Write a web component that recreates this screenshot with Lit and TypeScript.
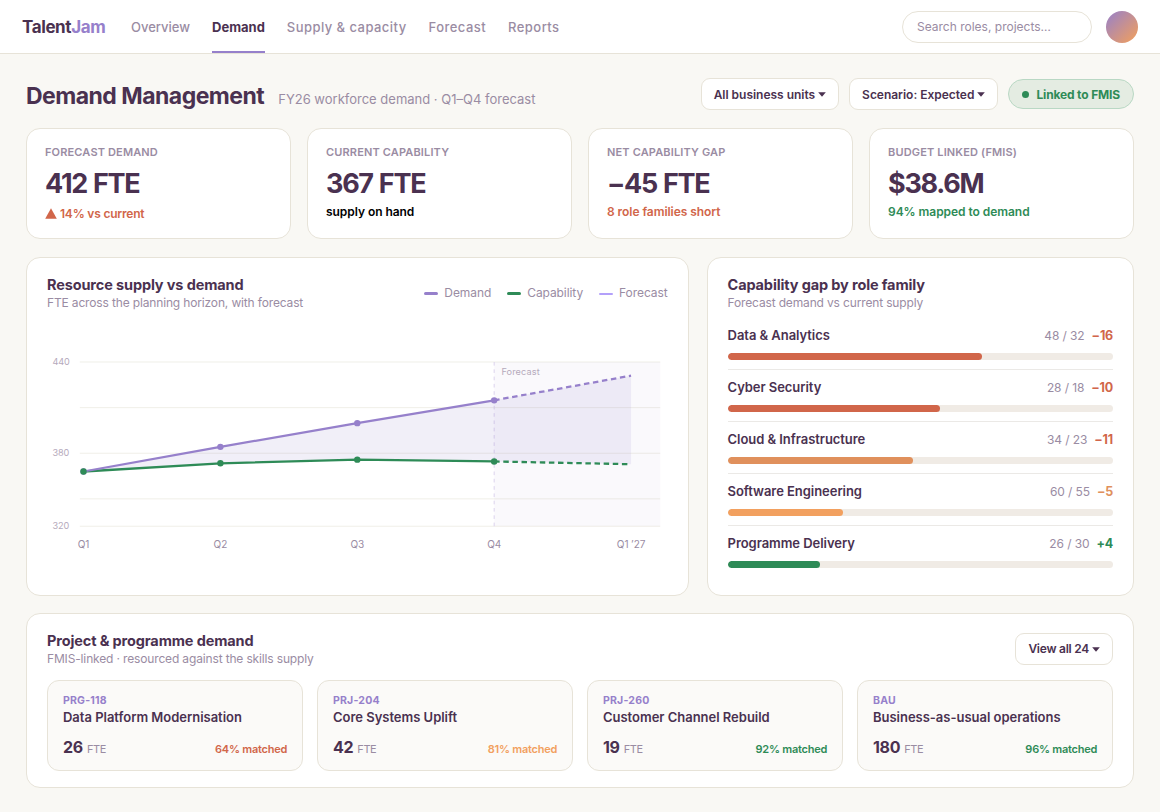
import { LitElement, html, svg, css } from 'lit';
import { customElement } from 'lit/decorators.js';

const nav = ['Overview', 'Demand', 'Supply & capacity', 'Forecast', 'Reports'];

const kpis = [
  { label: 'Forecast demand', value: '412 FTE', note: '14% vs current', tone: 'bad', up: true },
  { label: 'Current capability', value: '367 FTE', note: 'supply on hand', tone: 'plain' },
  { label: 'Net capability gap', value: '−45 FTE', note: '8 role families short', tone: 'bad' },
  { label: 'Budget linked (FMIS)', value: '$38.6M', note: '94% mapped to demand', tone: 'good' },
];

const roles = [
  { name: 'Data & Analytics', ratio: '48 / 32', gap: '−16', tone: 'bad', bar: 'bad', pct: 66 },
  { name: 'Cyber Security', ratio: '28 / 18', gap: '−10', tone: 'bad', bar: 'bad', pct: 55 },
  { name: 'Cloud & Infrastructure', ratio: '34 / 23', gap: '−11', tone: 'bad', bar: 'mid', pct: 48 },
  { name: 'Software Engineering', ratio: '60 / 55', gap: '−5', tone: 'mid', bar: 'warn', pct: 30 },
  { name: 'Programme Delivery', ratio: '26 / 30', gap: '+4', tone: 'good', bar: 'good', pct: 24 },
];

const projects = [
  { code: 'PRG-118', name: 'Data Platform Modernisation', fte: 26, match: 64, tone: 'bad' },
  { code: 'PRJ-204', name: 'Core Systems Uplift', fte: 42, match: 81, tone: 'warn' },
  { code: 'PRJ-260', name: 'Customer Channel Rebuild', fte: 19, match: 92, tone: 'good' },
  { code: 'BAU', name: 'Business-as-usual operations', fte: 180, match: 96, tone: 'good' },
];

const caret = html`<svg class="caret" width="8" height="5" viewBox="0 0 8 5"><path d="M.2 .3h7.6L4 4.7z" fill="currentColor"/></svg>`;

/* --- supply vs demand chart --- */
@customElement('supply-chart')
export class SupplyChart extends LitElement {
  static override styles = css`
    :host { display: block; min-height: 0; }
    svg { display: block; width: 100%; height: 100%; font-family: Inter, sans-serif; }
    .grid { stroke: #efede6; }
    .tick { font-size: 10px; fill: #b5a9bb; letter-spacing: -0.1px; }
    .zone { font-size: 10px; fill: #b5a9bb; letter-spacing: 0.15px; }
    .quarter { font-size: 11px; fill: #9a8ca3; text-anchor: middle; letter-spacing: -0.1px; }
    .demand { stroke: #9680cb; stroke-width: 2.5; fill: none; }
    .capability { stroke: #2e8b57; stroke-width: 2.5; fill: none; }
    .dashed { stroke-dasharray: 6 4; }
    .dot-demand { fill: #9680cb; }
    .dot-capability { fill: #2e8b57; }
  `;

  private xs = [40, 190, 340, 490];
  private demand = [140, 113, 87, 62];
  private capability = [140, 131, 127, 129];

  private points(ys: number[]) {
    return ys.map((y, i) => `${this.xs[i]},${y}`).join(' ');
  }

  override render() {
    return html`
      <svg viewBox="0 0 680 240">
        ${[20, 70, 120, 170, 200].map(y => svg`<line class="grid" x1="36" x2="672" y1=${y} y2=${y} />`)}
        <rect x="490" y="20" width="182" height="180" fill="#9680cb" opacity="0.05" />
        <line x1="490" x2="490" y1="20" y2="200" stroke="#d9d0ec" stroke-dasharray="4 4" />
        <polygon points="40,140 190,113 340,87 490,62 490,129 340,127 190,131" fill="#9680cb" opacity="0.13" />
        <polygon points="490,62 640,35 640,132 490,129" fill="#9680cb" opacity="0.12" />
        <text class="tick" x="6" y="23.5">440</text>
        <text class="tick" x="6" y="123.5">380</text>
        <text class="tick" x="6" y="203.5">320</text>
        <text class="zone" x="498" y="34.5">Forecast</text>
        <polyline class="capability" points=${this.points(this.capability)} />
        <polyline class="capability dashed" points="490,129 640,132" />
        <polyline class="demand" points=${this.points(this.demand)} />
        <polyline class="demand dashed" points="490,62 640,35" />
        ${this.xs.map((x, i) => svg`
          <circle class="dot-demand" cx=${x} cy=${this.demand[i]} r="3.5" />
          <circle class="dot-capability" cx=${x} cy=${this.capability[i]} r="3.5" />
        `)}
        ${['Q1', 'Q2', 'Q3', 'Q4', 'Q1 ’27'].map((q, i) => svg`<text class="quarter" x=${40 + i * 150} y="224">${q}</text>`)}
      </svg>
    `;
  }
}

@customElement('app-root')
export class AppRoot extends LitElement {
  static override styles = css`
    :host {
      display: block;
      min-height: 812px;
      background: #f9f8f4;
      color: #4a3150;
      font-family: Inter, sans-serif;
    }
    * { box-sizing: border-box; }

    .bad { color: #d1664a; }
    .mid { color: #e0905c; }
    .warn { color: #f2a05f; }
    .good { color: #2e8b57; }
    .plain { color: #000; }

    /* top bar */
    .topbar {
      display: flex;
      align-items: center;
      height: 54px;
      padding: 0 22px;
      background: #fff;
      border-bottom: 1px solid #e7e3d8;
    }
    .logo { width: 109px; font-size: 17px; font-weight: 700; letter-spacing: -0.4px; }
    .logo span { color: #9680cb; }
    nav { display: flex; gap: 22px; height: 53px; }
    nav a {
      display: flex;
      align-items: center;
      padding-top: 2px;
      border-bottom: 2px solid transparent;
      color: #9a8ca3;
      font-size: 13px;
      font-weight: 500;
      letter-spacing: 0.45px;
      white-space: nowrap;
    }
    nav a:first-child { letter-spacing: 0; }
    nav a.active { color: #4a3150; font-weight: 700; letter-spacing: 0; border-color: #9680cb; }
    .search {
      width: 190px;
      height: 32px;
      margin-left: auto;
      padding: 0 14px;
      border: 1px solid #e7e3d8;
      border-radius: 16px;
      color: #9a8ca3;
      font-size: 12px;
      line-height: 30px;
    }
    .avatar {
      width: 32px;
      height: 32px;
      margin-left: 14px;
      border-radius: 50%;
      background: linear-gradient(135deg, #9680cb, #f4a05a);
    }

    /* page head */
    main { display: flex; flex-direction: column; gap: 18px; padding: 24px 26px; }
    .head { display: flex; align-items: center; gap: 10px; height: 32px; }
    .titles { display: flex; align-items: baseline; gap: 14px; margin-right: auto; padding-top: 3px; }
    h1 { margin: 0; font-size: 23px; line-height: 32px; font-weight: 700; letter-spacing: -0.52px; }
    .titles span { color: #9a8ca3; font-size: 13px; }
    .button {
      display: flex;
      align-items: center;
      height: 32px;
      padding: 0 12px;
      background: #fff;
      border: 1px solid #e7e3d8;
      border-radius: 9px;
      font-size: 12px;
      font-weight: 600;
      letter-spacing: -0.02px;
      white-space: nowrap;
    }
    .panel-head .button { letter-spacing: -0.25px; }
    .caret { margin-left: 3px; margin-top: 1px; }
    .linked {
      display: flex;
      align-items: center;
      gap: 7px;
      height: 30px;
      padding: 0 13px;
      background: #e4ece2;
      border: 1px solid #b9d8c4;
      border-radius: 15px;
      color: #2e8b57;
      font-size: 12px;
      font-weight: 700;
      letter-spacing: -0.15px;
    }
    .linked::before { content: ''; width: 7px; height: 7px; border-radius: 50%; background: #2e8b57; }

    .card { background: #fff; border: 1px solid #e7e3d8; border-radius: 14px; }

    /* kpis */
    .kpis { display: grid; grid-template-columns: repeat(4, 1fr); gap: 16px; }
    .kpi { height: 111px; padding: 16px 18px; }
    .kpi .label {
      color: #9a8ca3;
      font-size: 11px;
      line-height: 14px;
      font-weight: 600;
      letter-spacing: 0.15px;
      text-transform: uppercase;
    }
    .kpi .value { margin-top: 6px; font-size: 27px; line-height: 38px; font-weight: 700; letter-spacing: -1.3px; word-spacing: 1px; }
    .kpi .note { display: flex; align-items: center; font-size: 12px; line-height: 18px; font-weight: 600; letter-spacing: -0.05px; }
    .kpi .note svg { margin: -1px 3px 0 0; }
    .kpi .note.up { padding-top: 2px; letter-spacing: -0.2px; }

    /* middle row */
    .split { display: grid; grid-template-columns: 1.55fr 1fr; gap: 18px; height: 338px; }
    .split .panel { height: 338.5px; }
    .panel { display: flex; flex-direction: column; padding: 17px 20px 18px; }
    .panel-head { display: flex; justify-content: space-between; align-items: center; }
    h2 { margin: 0; font-size: 14.5px; line-height: 20px; font-weight: 700; letter-spacing: -0.13px; }
    .sub { color: #9a8ca3; font-size: 12px; line-height: 15px; letter-spacing: -0.15px; }
    .legend { display: flex; gap: 16px; color: #9a8ca3; font-size: 12px; letter-spacing: -0.08px; }
    .legend span { display: flex; align-items: center; gap: 6px; }
    .legend i { width: 14px; height: 3px; margin-top: 2px; border-radius: 2px; }
    .legend .l-demand { background: #9680cb; }
    .legend .l-capability { background: #2e8b57; }
    .legend .l-forecast { height: 2px; background: #b3a0fa; }
    supply-chart { flex: 1; margin-top: 20px; }

    .roles { margin-top: 8px; }
    .role { height: 52px; padding-top: 7px; border-bottom: 1px solid #ebe9e6; }
    .role:last-child { height: 42px; border: none; }
    .role-line { display: flex; align-items: center; height: 20px; margin-bottom: 8px; font-size: 13px; font-weight: 600; letter-spacing: -0.05px; }
    .ratio { margin-left: auto; color: #9a8ca3; font-size: 12px; font-weight: 400; letter-spacing: -0.1px; }
    .gap { margin-left: 7px; font-size: 12.5px; font-weight: 700; letter-spacing: -0.2px; }
    .track { height: 7px; border-radius: 4px; background: #f0ebe5; overflow: hidden; }
    .fill { height: 7px; border-radius: 4px; background: currentColor; }

    /* projects */
    .projects-panel { height: 175px; }
    .projects { display: grid; grid-template-columns: repeat(4, 1fr); gap: 14px; margin-top: 14px; }
    .project { height: 91px; padding: 13px 15px; background: #fbfaf8; border: 1px solid #e7e3d8; border-radius: 12px; }
    .code { color: #9680cb; font-size: 10.5px; line-height: 14px; font-weight: 700; letter-spacing: 0.2px; }
    .name { font-size: 13px; line-height: 19px; font-weight: 600; letter-spacing: -0.02px; white-space: nowrap; }
    .numbers { display: flex; align-items: baseline; margin-top: 9.5px; line-height: 20px; }
    .count { font-size: 16px; font-weight: 700; letter-spacing: -0.3px; }
    .unit { margin-left: 4px; color: #9a8ca3; font-size: 11px; letter-spacing: -0.4px; }
    .match { margin-left: auto; font-size: 11px; font-weight: 600; letter-spacing: -0.25px; }
  `;

  override render() {
    return html`
      <header class="topbar">
        <div class="logo">Talent<span>Jam</span></div>
        <nav>${nav.map(n => html`<a class=${n === 'Demand' ? 'active' : ''}>${n}</a>`)}</nav>
        <div class="search">Search roles, projects…</div>
        <div class="avatar"></div>
      </header>
      <main>
        <div class="head">
          <div class="titles">
            <h1>Demand Management</h1>
            <span>FY26 workforce demand · Q1–Q4 forecast</span>
          </div>
          <div class="button">All business units${caret}</div>
          <div class="button">Scenario: Expected${caret}</div>
          <div class="linked">Linked to FMIS</div>
        </div>

        <section class="kpis">
          ${kpis.map(k => html`
            <div class="card kpi">
              <div class="label">${k.label}</div>
              <div class="value">${k.value}</div>
              <div class="note ${k.tone} ${k.up ? 'up' : ''}">
                ${k.up ? html`<svg width="12" height="11" viewBox="0 0 12 11"><path d="M6 .3l5.8 10.4H.2z" fill="currentColor"/></svg>` : ''}${k.note}
              </div>
            </div>
          `)}
        </section>

        <section class="split">
          <div class="card panel">
            <div class="panel-head">
              <div>
                <h2>Resource supply vs demand</h2>
                <div class="sub">FTE across the planning horizon, with forecast</div>
              </div>
              <div class="legend">
                <span><i class="l-demand"></i>Demand</span>
                <span><i class="l-capability"></i>Capability</span>
                <span><i class="l-forecast"></i>Forecast</span>
              </div>
            </div>
            <supply-chart></supply-chart>
          </div>
          <div class="card panel">
            <h2>Capability gap by role family</h2>
            <div class="sub">Forecast demand vs current supply</div>
            <div class="roles">
              ${roles.map(r => html`
                <div class="role">
                  <div class="role-line">
                    <span>${r.name}</span>
                    <span class="ratio">${r.ratio}</span>
                    <span class="gap ${r.tone}">${r.gap}</span>
                  </div>
                  <div class="track"><div class="fill ${r.bar}" style="width: ${r.pct}%"></div></div>
                </div>
              `)}
            </div>
          </div>
        </section>

        <section class="card panel projects-panel">
          <div class="panel-head">
            <div>
              <h2>Project &amp; programme demand</h2>
              <div class="sub">FMIS-linked · resourced against the skills supply</div>
            </div>
            <div class="button">View all 24${caret}</div>
          </div>
          <div class="projects">
            ${projects.map(p => html`
              <div class="project">
                <div class="code">${p.code}</div>
                <div class="name">${p.name}</div>
                <div class="numbers">
                  <span class="count">${p.fte}</span>
                  <span class="unit">FTE</span>
                  <span class="match ${p.tone}">${p.match}% matched</span>
                </div>
              </div>
            `)}
          </div>
        </section>
      </main>
    `;
  }
}
